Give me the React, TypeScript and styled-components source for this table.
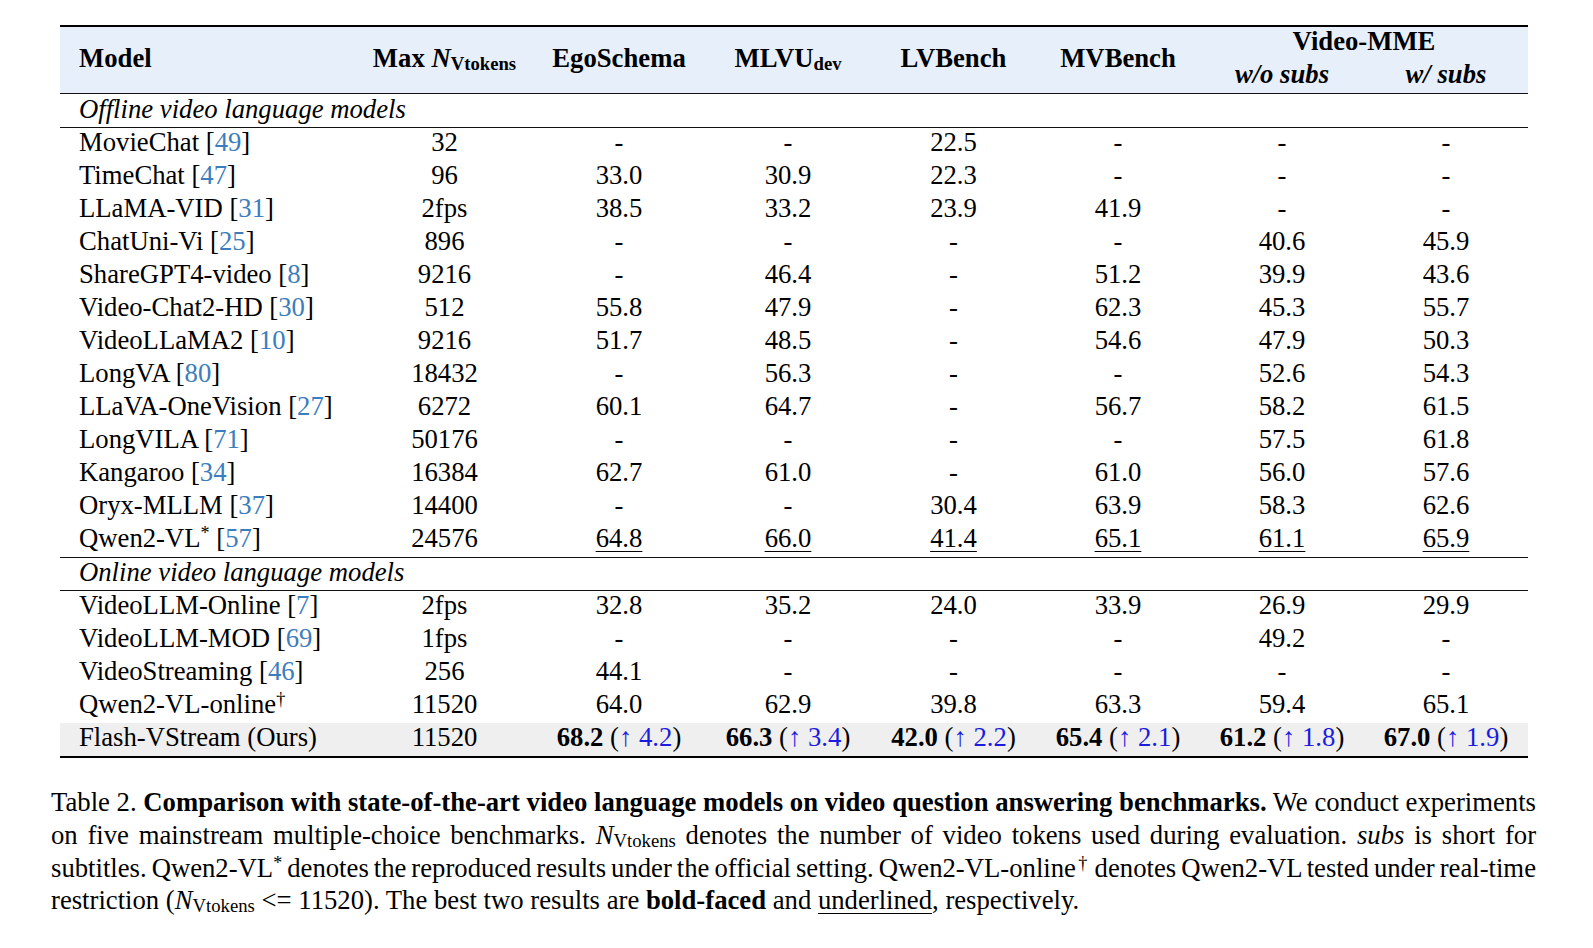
import React from "react";
import styled, { createGlobalStyle } from "styled-components";

const Global = createGlobalStyle`
  html, body { margin: 0; padding: 0; background: #ffffff; }
  body {
    font-family: "Liberation Serif", "Times New Roman", serif;
    color: #000000;
  }
`;

const COLS = "296px 177px 172px 166px 165px 164px 164px 164px";

const Page = styled.div`
  padding: 25px 0 0 51px;
  width: 1485px;
  font-size: 26.7px;
`;

const Table = styled.div`
  margin-left: 9px;
  width: 1468px;
  border-top: 2px solid #000;
  border-bottom: 2px solid #000;
`;

const Head = styled.div`
  display: grid;
  grid-template-columns: ${COLS};
  grid-template-rows: 33px 33px;
  background: #e7effb;
  border-bottom: 1px solid #111;
  font-weight: bold;
`;

const HeadCell = styled.div<{ $col: string; $row: string; $left?: boolean; $italic?: boolean }>`
  grid-column: ${(p) => p.$col};
  grid-row: ${(p) => p.$row};
  display: flex;
  align-items: center;
  justify-content: ${(p) => (p.$left ? "flex-start" : "center")};
  padding-left: ${(p) => (p.$left ? "19px" : "0")};
  padding-bottom: 4px;
  font-style: ${(p) => (p.$italic ? "italic" : "normal")};
  white-space: nowrap;
`;

const HeadText = styled.span`
  line-height: 29px;
`;

const SectionRow = styled.div<{ $h: number; $topRule?: boolean }>`
  height: ${(p) => p.$h}px;
  display: flex;
  align-items: center;
  padding-left: 19px;
  padding-bottom: 3px;
  box-sizing: border-box;
  font-style: italic;
  border-top: ${(p) => (p.$topRule ? "1px solid #111" : "none")};
  border-bottom: 1px solid #111;
`;

const Row = styled.div<{ $shade?: boolean }>`
  display: grid;
  grid-template-columns: ${COLS};
  height: 33px;
  align-items: center;
  background: ${(p) => (p.$shade ? "#efefef" : "transparent")};
`;

const Cell = styled.div<{ $left?: boolean }>`
  text-align: ${(p) => (p.$left ? "left" : "center")};
  padding-left: ${(p) => (p.$left ? "19px" : "0")};
  padding-bottom: 4px;
  white-space: nowrap;
  line-height: 29px;
`;

const Cite = styled.span`
  color: #3c7dbd;
`;

const Under = styled.span`
  text-decoration: underline;
  text-decoration-thickness: 1px;
  text-underline-offset: 4px;
`;

const Best = styled.span`
  font-weight: bold;
`;

const Gain = styled.span`
  color: #1c1ce0;
`;

const Sub = styled.sub`
  font-size: 0.7em;
  vertical-align: -0.18em;
  line-height: 0;
  font-style: normal;
`;

const Sup = styled.sup`
  font-size: 0.68em;
  vertical-align: 0.42em;
  line-height: 0;
`;

const Ital = styled.i`
  font-style: italic;
`;

const Caption = styled.div`
  margin-top: 28px;
  width: 1485px;
  line-height: 32.8px;
`;

const CaptionLine = styled.div<{ $last?: boolean; $tight?: boolean }>`
  text-align: justify;
  text-align-last: ${(p) => (p.$last ? "left" : "justify")};
  word-spacing: ${(p) => (p.$tight ? "-4px" : "0")};
`;

type Val = string | { u: string } | { b: string; g: string };

type DataRow = { name: React.ReactNode; vals: Val[]; shade?: boolean };

const NV = () => (
  <>
    <Ital>N</Ital>
    <Sub>Vtokens</Sub>
  </>
);

const offline: DataRow[] = [
  { name: <>MovieChat [<Cite>49</Cite>]</>, vals: ["32", "-", "-", "22.5", "-", "-", "-"] },
  { name: <>TimeChat [<Cite>47</Cite>]</>, vals: ["96", "33.0", "30.9", "22.3", "-", "-", "-"] },
  { name: <>LLaMA-VID [<Cite>31</Cite>]</>, vals: ["2fps", "38.5", "33.2", "23.9", "41.9", "-", "-"] },
  { name: <>ChatUni-Vi [<Cite>25</Cite>]</>, vals: ["896", "-", "-", "-", "-", "40.6", "45.9"] },
  { name: <>ShareGPT4-video [<Cite>8</Cite>]</>, vals: ["9216", "-", "46.4", "-", "51.2", "39.9", "43.6"] },
  { name: <>Video-Chat2-HD [<Cite>30</Cite>]</>, vals: ["512", "55.8", "47.9", "-", "62.3", "45.3", "55.7"] },
  { name: <>VideoLLaMA2 [<Cite>10</Cite>]</>, vals: ["9216", "51.7", "48.5", "-", "54.6", "47.9", "50.3"] },
  { name: <>LongVA [<Cite>80</Cite>]</>, vals: ["18432", "-", "56.3", "-", "-", "52.6", "54.3"] },
  { name: <>LLaVA-OneVision [<Cite>27</Cite>]</>, vals: ["6272", "60.1", "64.7", "-", "56.7", "58.2", "61.5"] },
  { name: <>LongVILA [<Cite>71</Cite>]</>, vals: ["50176", "-", "-", "-", "-", "57.5", "61.8"] },
  { name: <>Kangaroo [<Cite>34</Cite>]</>, vals: ["16384", "62.7", "61.0", "-", "61.0", "56.0", "57.6"] },
  { name: <>Oryx-MLLM [<Cite>37</Cite>]</>, vals: ["14400", "-", "-", "30.4", "63.9", "58.3", "62.6"] },
  {
    name: <>Qwen2-VL<Sup>*</Sup> [<Cite>57</Cite>]</>,
    vals: ["24576", { u: "64.8" }, { u: "66.0" }, { u: "41.4" }, { u: "65.1" }, { u: "61.1" }, { u: "65.9" }],
  },
];

const online: DataRow[] = [
  { name: <>VideoLLM-Online [<Cite>7</Cite>]</>, vals: ["2fps", "32.8", "35.2", "24.0", "33.9", "26.9", "29.9"] },
  { name: <>VideoLLM-MOD [<Cite>69</Cite>]</>, vals: ["1fps", "-", "-", "-", "-", "49.2", "-"] },
  { name: <>VideoStreaming [<Cite>46</Cite>]</>, vals: ["256", "44.1", "-", "-", "-", "-", "-"] },
  { name: <>Qwen2-VL-online<Sup>†</Sup></>, vals: ["11520", "64.0", "62.9", "39.8", "63.3", "59.4", "65.1"] },
  {
    name: <>Flash-VStream (Ours)</>,
    shade: true,
    vals: [
      "11520",
      { b: "68.2", g: "4.2" },
      { b: "66.3", g: "3.4" },
      { b: "42.0", g: "2.2" },
      { b: "65.4", g: "2.1" },
      { b: "61.2", g: "1.8" },
      { b: "67.0", g: "1.9" },
    ],
  },
];

const renderVal = (v: Val) => {
  if (typeof v === "string") return v;
  if ("u" in v) return <Under>{v.u}</Under>;
  return (
    <>
      <Best>{v.b}</Best> (<Gain>↑ {v.g}</Gain>)
    </>
  );
};

const Rows = ({ rows }: { rows: DataRow[] }) => (
  <>
    {rows.map((r, i) => (
      <Row key={i} $shade={r.shade}>
        <Cell $left>{r.name}</Cell>
        {r.vals.map((v, j) => (
          <Cell key={j}>{renderVal(v)}</Cell>
        ))}
      </Row>
    ))}
  </>
);

export default function App() {
  return (
    <Page>
      <Global />
      <Table>
        <Head>
          <HeadCell $col="1" $row="1 / 3" $left>
            <HeadText>Model</HeadText>
          </HeadCell>
          <HeadCell $col="2" $row="1 / 3">
            <HeadText>
              Max <NV />
            </HeadText>
          </HeadCell>
          <HeadCell $col="3" $row="1 / 3">
            <HeadText>EgoSchema</HeadText>
          </HeadCell>
          <HeadCell $col="4" $row="1 / 3">
            <HeadText>
              MLVU<Sub>dev</Sub>
            </HeadText>
          </HeadCell>
          <HeadCell $col="5" $row="1 / 3">
            <HeadText>LVBench</HeadText>
          </HeadCell>
          <HeadCell $col="6" $row="1 / 3">
            <HeadText>MVBench</HeadText>
          </HeadCell>
          <HeadCell $col="7 / 9" $row="1">
            <HeadText>Video-MME</HeadText>
          </HeadCell>
          <HeadCell $col="7" $row="2" $italic>
            <HeadText>w/o subs</HeadText>
          </HeadCell>
          <HeadCell $col="8" $row="2" $italic>
            <HeadText>w/ subs</HeadText>
          </HeadCell>
        </Head>
        <SectionRow $h={34}>Offline video language models</SectionRow>
        <Rows rows={offline} />
        <SectionRow $h={34} $topRule>
          Online video language models
        </SectionRow>
        <Rows rows={online} />
      </Table>
      <Caption>
        <CaptionLine>
          Table 2. <Best>Comparison with state-of-the-art video language models on video question answering benchmarks.</Best> We
          conduct experiments
        </CaptionLine>
        <CaptionLine>
          on five mainstream multiple-choice benchmarks. <NV /> denotes the number of video tokens used during evaluation.{" "}
          <Ital>subs</Ital> is short for
        </CaptionLine>
        <CaptionLine $tight>
          subtitles. Qwen2-VL<Sup>*</Sup> denotes the reproduced results under the official setting. Qwen2-VL-online
          <Sup>†</Sup> denotes Qwen2-VL tested under real-time
        </CaptionLine>
        <CaptionLine $last>
          restriction (<NV /> &lt;= 11520). The best two results are <Best>bold-faced</Best> and <Under>underlined</Under>,
          respectively.
        </CaptionLine>
      </Caption>
    </Page>
  );
}
